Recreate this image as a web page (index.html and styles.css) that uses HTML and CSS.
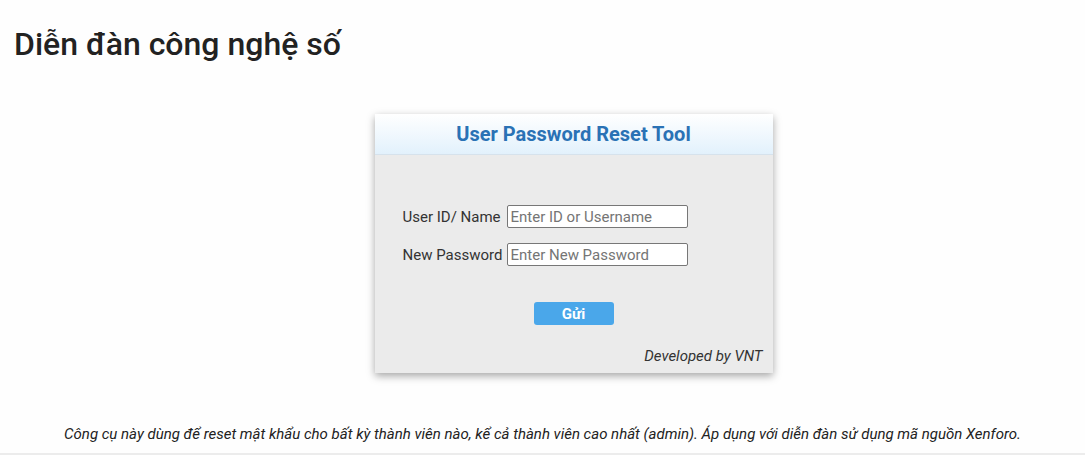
FILE: index.html
```html
<!DOCTYPE html>
<html lang="vi">

<head>
    <meta charset="UTF-8">
    <meta name="viewport" content="width=device-width, initial-scale=1.0">
    <title>Diễn đàn công nghệ số</title>
    <link rel="stylesheet" href="styles.css">
</head>

<body>
    <h1 class="site-title">Diễn đàn công nghệ số</h1>

    <div class="main">
        <div class="reset-box">
            <div class="reset-header">User Password Reset Tool</div>

            <form class="reset-form" onsubmit="return false;">
                <div class="form-row">
                    <label for="userId">User ID/ Name</label>
                    <input type="text" id="userId" placeholder="Enter ID or Username">
                </div>
                <div class="form-row">
                    <label for="newPass">New Password</label>
                    <input type="text" id="newPass" placeholder="Enter New Password">
                </div>
                <button type="submit" class="submit-button">Gửi</button>
            </form>

            <p class="credit">Developed by VNT</p>
        </div>
    </div>

    <p class="note">Công cụ này dùng để reset mật khẩu cho bất kỳ thành viên nào, kể cả thành viên cao nhất (admin). Áp dụng với diễn đàn sử dụng mã nguồn Xenforo.</p>

    <div class="bottom-bar"></div>
</body>

</html>
```

FILE: styles.css
```css
/* Base styling */
body {
    font-family: Roboto, "Noto Sans", sans-serif;
    margin: 0;
    background-color: #fefefe;
    color: #222;
    display: flex;
    flex-direction: column;
    min-height: 455px;
}

.site-title {
    font-size: 32px;
    font-weight: 500;
    margin: 0;
    padding: 24px 14px 0;
    color: #222;
    line-height: 40px;
}

/* Reset box */
.main {
    padding-left: 62px;
    margin-top: 50px;
}

.reset-box {
    width: 398px;
    margin: 0 auto;
    background: #ebebeb;
    box-shadow: 0 3px 8px rgba(0, 0, 0, 0.35);
}

.reset-header {
    height: 40px;
    line-height: 40px;
    text-align: center;
    font-size: 20px;
    font-weight: bold;
    color: #2a72b5;
    background: linear-gradient(180deg, #ffffff, #e2f1fc);
    border-bottom: 1px solid #d6e2ec;
}

.reset-form {
    display: flex;
    flex-direction: column;
    padding-top: 50px;
}

.form-row {
    display: flex;
    align-items: center;
    margin-bottom: 15px;
    padding-left: 28px;
}

.form-row label {
    width: 104px;
    font-size: 15px;
    color: #333;
    white-space: nowrap;
}

.form-row input {
    width: 181px;
    height: 23px;
    box-sizing: border-box;
    border: 1px solid #777;
    border-radius: 2px;
    padding: 0 3px;
    font-family: Roboto, sans-serif;
    font-size: 15px;
    background: #fff;
    color: #333;
}

.form-row input::placeholder {
    color: #757575;
}

.submit-button {
    margin: 21px auto 0;
    width: 80px;
    height: 23px;
    border: none;
    border-radius: 3px;
    background-color: #4aa7ea;
    color: #fff;
    font-family: Roboto, sans-serif;
    font-size: 15px;
    font-weight: bold;
    cursor: pointer;
}

.credit {
    margin: 0;
    padding: 21px 10px 7px 0;
    line-height: 20px;
    text-align: right;
    font-style: italic;
    font-size: 15px;
    color: #333;
}

.note {
    margin: 52px 0 0;
    text-align: center;
    font-style: italic;
    font-size: 15px;
    color: #222;
}

.bottom-bar {
    margin-top: auto;
    height: 2px;
    background: #ececec;
}
```
